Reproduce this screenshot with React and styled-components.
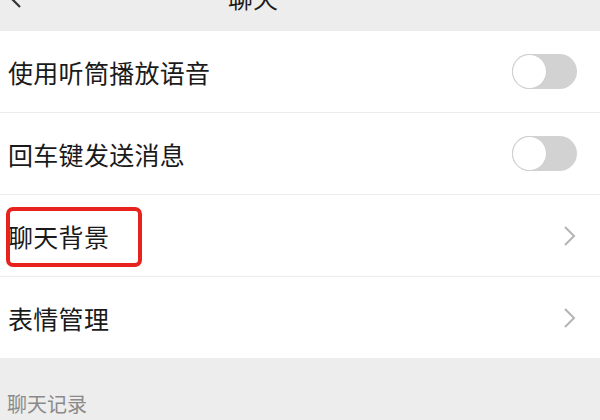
import styled, { createGlobalStyle } from "styled-components"

const Global = createGlobalStyle`
    html, body {
        margin: 0;
        padding: 0;
        background: #ededed;
    }
    body {
        font-family: "Noto Sans CJK SC", "Noto Sans", sans-serif;
    }
`

const Page = styled.div`
    width: 600px;
    height: 420px;
    overflow: hidden;
    background: #ededed;
    display: flex;
    flex-direction: column;
`

const Header = styled.div`
    height: 31px;
    flex-shrink: 0;
    overflow: hidden;
    background: #ededed;
`

const HeaderInner = styled.div`
    height: 62px;
    margin-top: -34px;
    display: flex;
    align-items: center;
    position: relative;
    padding-left: 8px;
`

const Title = styled.div`
    position: absolute;
    left: 228px;
    font-size: 25px;
    color: #1a1a1a;
`

const List = styled.div`
    background: #fff;
    display: flex;
    flex-direction: column;
`

const Row = styled.div`
    height: 81px;
    display: flex;
    align-items: center;
    justify-content: space-between;
    padding: 0 23px 0 8px;
    border-bottom: ${p => (p.last ? "none" : "1px solid #ececec")};
`

const Label = styled.span`
    font-size: 25px;
    line-height: 36px;
    color: #1a1a1a;
    position: relative;
    letter-spacing: 0.3px;
`

const Highlight = styled.span`
    position: absolute;
    left: -2px;
    top: -11px;
    width: 136px;
    height: 60px;
    box-sizing: border-box;
    border: 4px solid #e8231e;
    border-radius: 7px;
`

const Switch = styled.div`
    width: 65px;
    height: 35px;
    border-radius: 18px;
    background: #d2d2d2;
    display: flex;
    align-items: center;
    padding: 1px;
    box-sizing: border-box;
`

const Knob = styled.div`
    width: 33px;
    height: 33px;
    border-radius: 50%;
    background: #fff;
    box-shadow: 0 0 0 1px #cfcfcf;
`

const SectionTitle = styled.div`
    padding: 31px 0 0 7px;
    font-size: 20px;
    color: #8a8a8a;
`

const Chevron = () => (
    <svg width="14" height="22" viewBox="0 0 14 22">
        <path d="M2 2 L11 11 L2 20" fill="none" stroke="#b4b4b4" strokeWidth="2" />
    </svg>
)

const Back = () => (
    <svg width="14" height="24" viewBox="0 0 14 24">
        <path d="M12 2 L2 12 L12 22" fill="none" stroke="#333" strokeWidth="2.2" />
    </svg>
)

const App = () => {
    return (
        <Page>
            <Global />
            <Header>
                <HeaderInner>
                    <Back />
                    <Title>聊天</Title>
                </HeaderInner>
            </Header>
            <List>
                <Row>
                    <Label>使用听筒播放语音</Label>
                    <Switch><Knob /></Switch>
                </Row>
                <Row>
                    <Label>回车键发送消息</Label>
                    <Switch><Knob /></Switch>
                </Row>
                <Row>
                    <Label>
                        聊天背景
                        <Highlight />
                    </Label>
                    <Chevron />
                </Row>
                <Row last>
                    <Label>表情管理</Label>
                    <Chevron />
                </Row>
            </List>
            <SectionTitle>聊天记录</SectionTitle>
        </Page>
    )
}

export default App
